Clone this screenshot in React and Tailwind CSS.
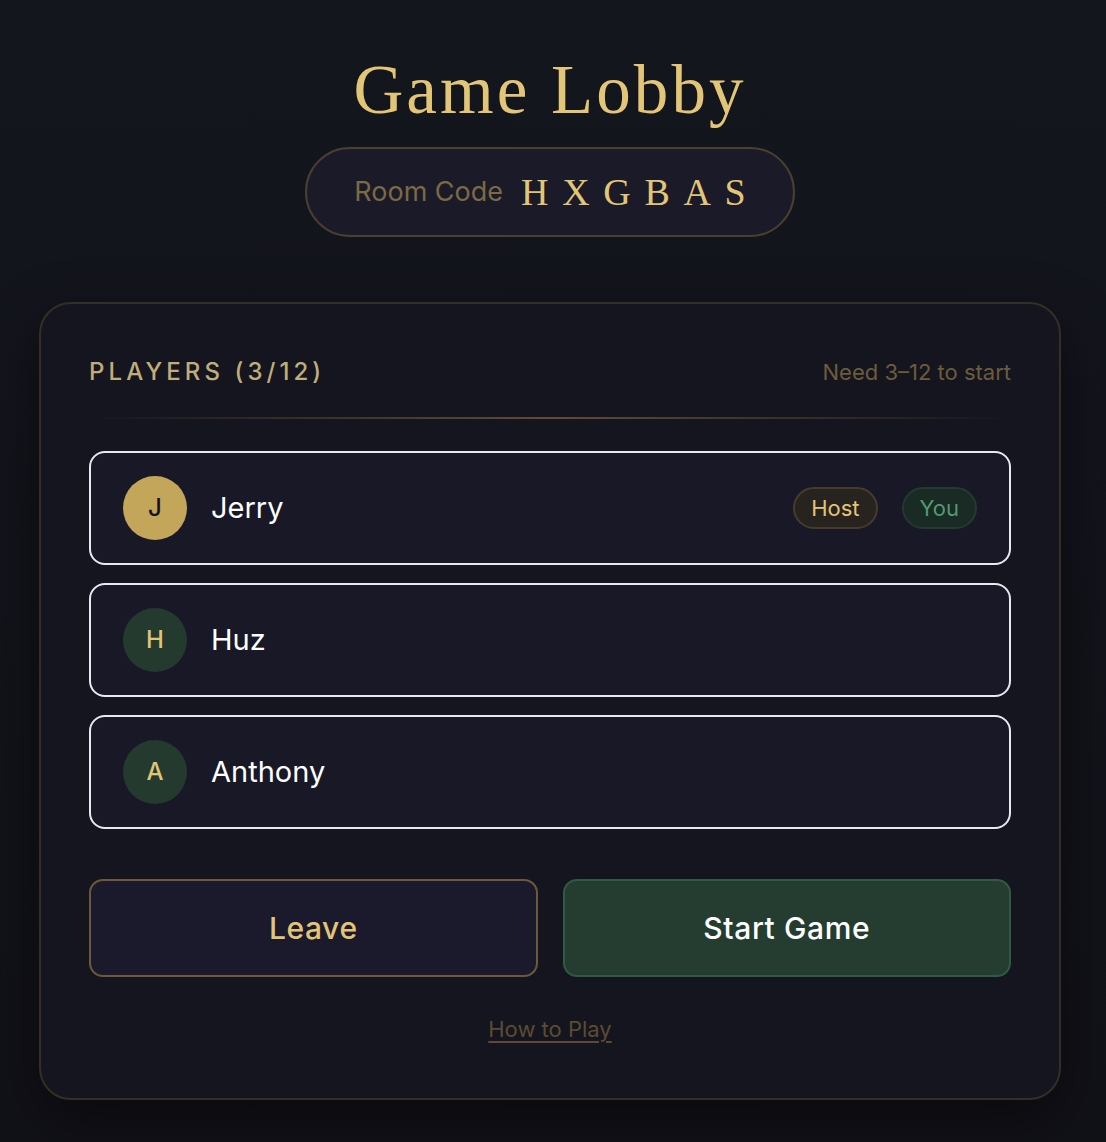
const players = [
  { name: 'Jerry', host: true, you: true },
  { name: 'Huz' },
  { name: 'Anthony' },
]

function Avatar({ name, host }) {
  return (
    <div
      className={
        'flex h-16 w-16 shrink-0 items-center justify-center rounded-full text-[24px] font-medium ' +
        (host ? 'bg-[#c4a65a] text-[#15151f]' : 'bg-[#243a2e] text-[#e2c577]')
      }
    >
      {name[0]}
    </div>
  )
}

export default function App() {
  return (
    <div className="min-h-[1142px] bg-gradient-to-b from-[#14161e] to-[#111118] font-['Inter','Noto_Sans',sans-serif]">
      <div className="w-[1100px]">
        <div className="flex flex-col items-center pt-[50px]">
          <h1 className="font-['Liberation_Serif',serif] text-[69px] leading-[80px] tracking-[0.045em] text-[#e2c577]">
            Game Lobby
          </h1>
          <div className="mt-[17px] flex h-[90px] w-[490px] items-center justify-center gap-[18px] rounded-full border-2 border-[#4a4030] bg-[#1b1a28]">
            <span className="text-[27px] text-[#7a6a45]">Room Code</span>
            <span className="font-['Liberation_Serif',serif] text-[38px] tracking-[0.36em] text-[#e2c577] mr-[-0.36em]">
              HXGBAS
            </span>
          </div>
        </div>

        <div className="ml-[39px] mt-[65px] w-[1022px] rounded-[32px] border-2 border-[#342f26] bg-[#15151f] px-[48px] pt-[50px] pb-[52px] shadow-[0_20px_60px_rgba(0,0,0,0.45)]">
          <div className="flex items-center justify-between">
            <h2 className="text-[24px] font-medium tracking-[0.17em] text-[#bfae7a]">PLAYERS (3/12)</h2>
            <span className="text-[22px] text-[#6b5c3c]">Need 3–12 to start</span>
          </div>
          <div className="mt-[27px] h-[2px] bg-gradient-to-r from-transparent via-[#5e4f31] to-transparent" />

          <div className="mt-[32px] flex flex-col gap-[18px]">
            {players.map((p) => (
              <div
                key={p.name}
                className="flex h-[114px] items-center rounded-[16px] border-2 border-[#e8e8ee] bg-[#181827] pl-[32px] pr-[32px]"
              >
                <Avatar name={p.name} host={p.host} />
                <span className="ml-[24px] text-[29px] text-white">{p.name}</span>
                <div className="ml-auto flex items-center gap-[24px]">
                  {p.host && (
                    <span className="flex h-[42px] items-center rounded-full border-2 border-[#463c2a] bg-[#27241f] px-[16px] text-[22px] text-[#e2c577]">
                      Host
                    </span>
                  )}
                  {p.you && (
                    <span className="flex h-[42px] items-center rounded-full border-2 border-[#233a2f] bg-[#1a2a25] px-[16px] text-[22px] text-[#4f9a70]">
                      You
                    </span>
                  )}
                </div>
              </div>
            ))}
          </div>

          <div className="mt-[50px] grid grid-cols-2 gap-[25px]">
            <button className="h-[98px] rounded-[14px] border-2 border-[#6b5a3a] bg-[#1b1a2c] text-[30px] font-medium tracking-[0.02em] text-[#e2c577]">
              Leave
            </button>
            <button className="h-[98px] rounded-[14px] border-2 border-[#2f5a43] bg-[#243d30] text-[30px] font-medium tracking-[0.02em] text-white">
              Start Game
            </button>
          </div>

          <div className="mt-[36px] text-center">
            <a href="#" className="text-[22px] text-[#5a4c32] underline underline-offset-4">
              How to Play
            </a>
          </div>
        </div>
      </div>
    </div>
  )
}
